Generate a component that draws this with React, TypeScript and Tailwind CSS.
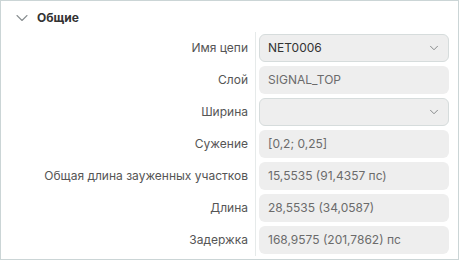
import React from "react";
import { ChevronDown } from "lucide-react";

type Row = { label: string; value: string; select?: boolean; dark?: boolean };

const rows: Row[] = [
  { label: "Имя цепи", value: "NET0006", select: true, dark: true },
  { label: "Слой", value: "SIGNAL_TOP" },
  { label: "Ширина", value: "", select: true },
  { label: "Сужение", value: "[0,2; 0,25]" },
  { label: "Общая длина зауженных участков", value: "15,5535 (91,4357 пс)" },
  { label: "Длина", value: "28,5535 (34,0587)" },
  { label: "Задержка", value: "168,9575 (201,7862) пс" },
];

const App: React.FC = () => {
  return (
    <div className="w-[459px] h-[260px] border border-[#cbd5d6] bg-white font-['Inter','Noto_Sans',sans-serif] text-[12px]">
      {/* Section header */}
      <div className="h-[31px] flex items-center pl-[11px] pt-[3px]">
        <ChevronDown size={20} strokeWidth={1.3} className="text-[#8a8f91]" />
        <span className="ml-[5px] font-bold text-[#333333]">Общие</span>
      </div>

      {/* Properties */}
      <div className="flex flex-col">
        {rows.map((row) => (
          <div key={row.label} className="flex h-[32px]">
            <div className="w-[254px] flex items-center justify-end pr-[7px] text-[#555555]">
              {row.label}
            </div>
            <div className="flex-1 border-l border-[#e6eaea] pl-[3px] pr-[8px] py-[2px]">
              {row.select ? (
                <div className="h-[28px] w-[190px] flex items-center justify-between rounded-[6px] border border-[#d6dcdc] bg-[#eeeeee] pl-[8px] pr-[7px]">
                  <span className={row.dark ? "text-[#333333]" : "text-[#6b6b6b]"}>{row.value}</span>
                  <ChevronDown size={14} strokeWidth={1.4} className="text-[#6f7375]" />
                </div>
              ) : (
                <div className="h-[28px] w-[190px] flex items-center rounded-[6px] bg-[#eeeeee] pl-[9px] text-[#6b6b6b]">
                  {row.value}
                </div>
              )}
            </div>
          </div>
        ))}
      </div>
    </div>
  );
};

export default App;
